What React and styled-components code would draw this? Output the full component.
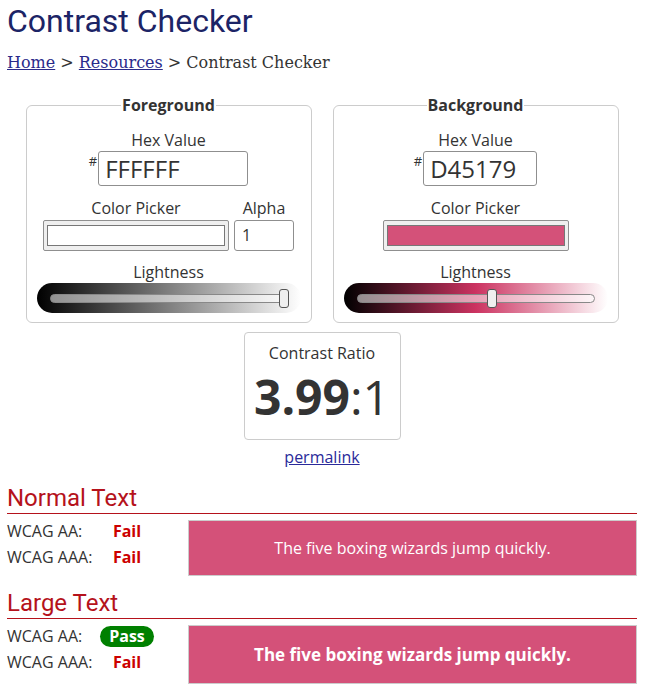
import React from "react";
import styled, { createGlobalStyle } from "styled-components";

const GlobalStyle = createGlobalStyle`
  body {
    margin: 0;
    background: #fff;
    font-family: "Open Sans", "DejaVu Sans", sans-serif;
    color: #333;
  }
`;

const Page = styled.div`
  margin: 0 8px 0 7px;
`;

const Title = styled.h1`
  margin: 3px 0 0;
  font-family: Roboto, sans-serif;
  font-weight: 400;
  font-size: 32px;
  line-height: 37px;
  color: #1c2466;
`;

const Crumbs = styled.div`
  margin-top: 13px;
  font-family: "DejaVu Serif", serif;
  font-size: 16px;
  line-height: 19px;
  color: #333;
`;

const CrumbLink = styled.a`
  color: #2a2a8a;
  text-decoration: underline;
`;

const Panels = styled.div`
  display: flex;
  justify-content: center;
  gap: 21px;
  margin-top: 22px;
`;

const Panel = styled.fieldset`
  width: 284px;
  box-sizing: border-box;
  margin: 0;
  padding: 0 10px 9px;
  border: 1px solid #ccc;
  border-radius: 6px;
  display: flex;
  flex-direction: column;
  align-items: center;
`;

const Legend = styled.legend`
  margin: 0 auto;
  padding: 0 1px;
  font-weight: 700;
  font-size: 16px;
  line-height: 22px;
`;

const Label = styled.div`
  font-size: 16px;
  line-height: 22px;
  text-align: center;
  margin-top: ${(p) => p.$top || 0}px;
`;

const HexRow = styled.div`
  display: flex;
  align-items: flex-start;
`;

const Hash = styled.span`
  font-size: 13px;
  line-height: 14px;
  margin-top: 3px;
  margin-right: 1px;
`;

const HexInput = styled.div`
  width: ${(p) => p.$width}px;
  height: 35px;
  box-sizing: border-box;
  border: 1px solid #8f8f8f;
  border-radius: 3px;
  padding: 0 6px;
  font-size: 24px;
  line-height: 33px;
  color: #333;
`;

const PickRow = styled.div`
  display: flex;
  gap: 5px;
  margin-top: 11px;
`;

const PickCol = styled.div`
  display: flex;
  flex-direction: column;
  align-items: center;
`;

const Picker = styled.div`
  width: 186px;
  height: 31px;
  box-sizing: border-box;
  margin-top: 1px;
  padding: 4px 3px;
  border: 1px solid #8f8f8f;
  border-radius: 2px;
  background: #efefef;
`;

const Swatch = styled.div`
  height: 100%;
  box-sizing: border-box;
  border: 1px solid #777;
  background: ${(p) => p.$color};
`;

const AlphaInput = styled.div`
  width: 60px;
  height: 31px;
  box-sizing: border-box;
  margin-top: 1px;
  border: 1px solid #8f8f8f;
  border-radius: 3px;
  padding: 0 7px;
  font-size: 16px;
  line-height: 29px;
`;

const Slider = styled.div`
  width: 264px;
  height: 30px;
  border-radius: 15px;
  background: ${(p) => p.$gradient};
  display: flex;
  align-items: center;
  justify-content: center;
`;

const Track = styled.div`
  position: relative;
  width: 238px;
  height: 9px;
  box-sizing: border-box;
  border: 1px solid #888;
  border-radius: 5px;
  background: rgba(255, 255, 255, 0.55);
`;

const Thumb = styled.div`
  position: absolute;
  top: -6px;
  width: 10px;
  height: 19px;
  box-sizing: border-box;
  border: 1px solid #555;
  border-radius: 3px;
  background: #efefef;
`;

const RatioWrap = styled.div`
  display: flex;
  flex-direction: column;
  align-items: center;
  margin-top: 9px;
`;

const RatioBox = styled.div`
  width: 157px;
  height: 108px;
  box-sizing: border-box;
  border: 1px solid #ccc;
  border-radius: 4px;
  padding-top: 9px;
  text-align: center;
`;

const Ratio = styled.div`
  font-size: 48px;
  line-height: 60px;
  margin-top: 3px;
  color: #333;
  b {
    font-weight: 700;
  }
`;

const Permalink = styled.a`
  margin-top: 6px;
  font-size: 16px;
  line-height: 22px;
  color: #2a2a9a;
  text-decoration: underline;
`;

const Section = styled.section`
  margin-top: ${(p) => p.$top}px;
`;

const SectionTitle = styled.h2`
  margin: 0;
  padding-bottom: 1px;
  border-bottom: 1px solid #b5121b;
  font-family: Roboto, sans-serif;
  font-weight: 400;
  font-size: 24px;
  line-height: 28px;
  color: #b5121b;
`;

const Results = styled.div`
  display: flex;
  margin-top: 6px;
`;

const Grades = styled.div`
  width: 181px;
  flex: none;
`;

const Grade = styled.div`
  display: flex;
  font-size: 16px;
  line-height: 22px;
  margin-bottom: 4px;
`;

const GradeName = styled.span`
  width: 90px;
`;

const Verdict = styled.span`
  width: 60px;
  text-align: center;
  font-weight: 700;
`;

const Fail = styled.span`
  color: #c00;
`;

const Pass = styled.span`
  display: inline-block;
  padding: 0 9px;
  line-height: 21px;
  border-radius: 11px;
  background: #008000;
  color: #fff;
`;

const Sample = styled.div`
  flex: 1;
  height: ${(p) => p.$height}px;
  box-sizing: border-box;
  border: 1px solid #ccc;
  background: #d45179;
  color: #fff;
  display: flex;
  align-items: center;
  justify-content: center;
  font-size: ${(p) => (p.$large ? 17 : 16)}px;
  font-weight: ${(p) => (p.$large ? 700 : 400)};
`;

// track is 238px wide, thumb 10px: keep the thumb inside the track
const thumbLeft = (lightness) => `${(lightness / 100) * 228}px`;

const ColorPanel = ({ title, hex, hexWidth, color, alpha, gradient, lightness }) => (
  <Panel>
    <Legend>{title}</Legend>
    <Label $top={13}>Hex Value</Label>
    <HexRow>
      <Hash>#</Hash>
      <HexInput $width={hexWidth}>{hex}</HexInput>
    </HexRow>
    <PickRow>
      <PickCol>
        <Label>Color Picker</Label>
        <Picker>
          <Swatch $color={color} />
        </Picker>
      </PickCol>
      {alpha && (
        <PickCol>
          <Label>Alpha</Label>
          <AlphaInput>{alpha}</AlphaInput>
        </PickCol>
      )}
    </PickRow>
    <Label $top={10}>Lightness</Label>
    <Slider $gradient={gradient}>
      <Track>
        <Thumb style={{ left: thumbLeft(lightness) }} />
      </Track>
    </Slider>
  </Panel>
);

const Result = ({ level, pass }) => (
  <Grade>
    <GradeName>WCAG {level}:</GradeName>
    <Verdict>{pass ? <Pass>Pass</Pass> : <Fail>Fail</Fail>}</Verdict>
  </Grade>
);

export default function App() {
  return (
    <Page>
      <GlobalStyle />
      <Title>Contrast Checker</Title>
      <Crumbs>
        <CrumbLink href="#">Home</CrumbLink> &gt; <CrumbLink href="#">Resources</CrumbLink> &gt; Contrast Checker
      </Crumbs>

      <Panels>
        <ColorPanel
          title="Foreground"
          hex="FFFFFF"
          hexWidth={150}
          color="#fff"
          alpha="1"
          gradient="linear-gradient(to right, #000, #fff)"
          lightness={100}
        />
        <ColorPanel
          title="Background"
          hex="D45179"
          hexWidth={114}
          color="#d45179"
          gradient="linear-gradient(to right, hsl(342,60%,0%), hsl(342,60%,50%), hsl(342,60%,100%))"
          lightness={57}
        />
      </Panels>

      <RatioWrap>
        <RatioBox>
          <Label>Contrast Ratio</Label>
          <Ratio>
            <b>3.99</b>:1
          </Ratio>
        </RatioBox>
        <Permalink href="#">permalink</Permalink>
      </RatioWrap>

      <Section $top={16}>
        <SectionTitle>Normal Text</SectionTitle>
        <Results>
          <Grades>
            <Result level="AA" />
            <Result level="AAA" />
          </Grades>
          <Sample $height={56}>The five boxing wizards jump quickly.</Sample>
        </Results>
      </Section>

      <Section $top={13}>
        <SectionTitle>Large Text</SectionTitle>
        <Results>
          <Grades>
            <Result level="AA" pass />
            <Result level="AAA" />
          </Grades>
          <Sample $height={59} $large>
            The five boxing wizards jump quickly.
          </Sample>
        </Results>
      </Section>
    </Page>
  );
}
